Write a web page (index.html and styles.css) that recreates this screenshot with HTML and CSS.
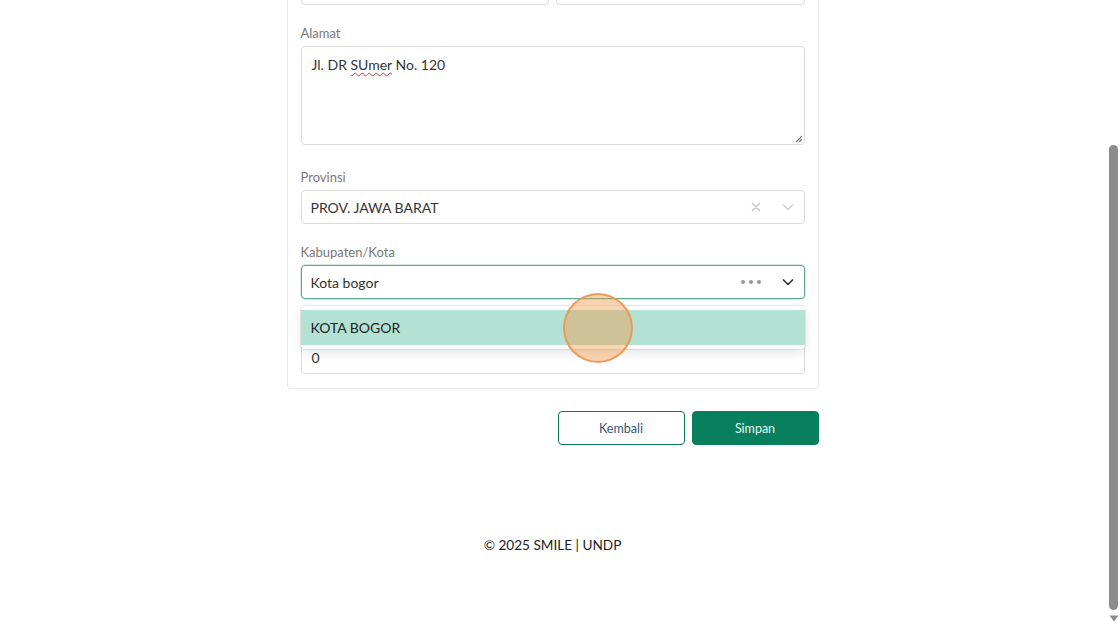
FILE: index.html
```html
<!DOCTYPE html>
<html lang="id">
<head>
<meta charset="utf-8">
<title>SMILE</title>
<link rel="stylesheet" href="styles.css">
</head>
<body>
<div class="viewport">
  <main class="page">
    <section class="card">
      <div class="field">
        <div class="row2">
          <div>
            <label class="label">Kecamatan</label>
            <div class="input"></div>
          </div>
          <div>
            <label class="label">Kelurahan</label>
            <div class="input"></div>
          </div>
        </div>
      </div>

      <div class="field field-area">
        <label class="label">Alamat</label>
        <div class="textarea">Jl. DR <span class="misspelled">SUmer</span> No. 120
          <svg class="grip" width="9" height="9" viewBox="0 0 9 9"><path d="M8 2 L2 8 M8 5 L5 8" stroke="#777" stroke-width="1.2"/></svg>
        </div>
      </div>

      <div class="field">
        <label class="label">Provinsi</label>
        <div class="select">
          <span class="value">PROV. JAWA BARAT</span>
          <span class="indicators">
            <svg class="ico" width="14" height="14" viewBox="0 0 14 14"><path d="M3.5 3.5 L10.5 10.5 M10.5 3.5 L3.5 10.5" stroke="#c8c8c8" stroke-width="1.6" stroke-linecap="round"/></svg>
            <svg class="ico chev" width="14" height="14" viewBox="0 0 14 14"><path d="M2.5 5 L7 9.5 L11.5 5" fill="none" stroke="#cccccc" stroke-width="1.4" stroke-linecap="round" stroke-linejoin="round"/></svg>
          </span>
        </div>
      </div>

      <div class="field">
        <label class="label">Kabupaten/Kota</label>
        <div class="select-wrap">
          <div class="select focused">
            <span class="value">Kota bogor</span>
            <span class="indicators">
              <span class="dots"><i></i><i></i><i></i></span>
              <svg class="ico chev" width="14" height="14" viewBox="0 0 14 14"><path d="M2.5 5 L7 9.5 L11.5 5" fill="none" stroke="#333" stroke-width="1.7" stroke-linecap="round" stroke-linejoin="round"/></svg>
            </span>
          </div>
          <div class="menu">
            <div class="option">KOTA BOGOR</div>
          </div>
          <div class="cursor"></div>
        </div>
      </div>

      <div class="field last">
        <label class="label">Kode Pos</label>
        <div class="input text">0</div>
      </div>
    </section>

    <div class="actions">
      <button class="btn btn-outline">Kembali</button>
      <button class="btn btn-primary">Simpan</button>
    </div>

    <footer class="footer">© 2025 SMILE | UNDP</footer>
  </main>
  <aside class="scrollbar">
    <div class="thumb"></div>
    <svg class="arrow" width="10" height="7" viewBox="0 0 10 7"><path d="M0.5 0.5 H9.5 L5 6.5 Z" fill="#8a8a8a"/></svg>
  </aside>
</div>
</body>
</html>
```

FILE: styles.css
```css
* { box-sizing: border-box; }
html, body {
  margin: 0;
  height: 626px;
  overflow: hidden;
  background: #fff;
}
body {
  font-family: Lato, "Noto Sans", "Liberation Sans", sans-serif;
  color: #333;
}
.viewport {
  display: flex;
  height: 626px;
}
.page {
  flex: 1;
  min-width: 0;
  display: flex;
  flex-direction: column;
  align-items: center;
}
.card {
  width: 532px;
  margin-top: -65px;
  border: 1px solid #e8e8e8;
  border-radius: 4px;
  padding: 13px 13px 14px;
  background: #fff;
}
.field { margin-bottom: 19px; }
.field.last { margin-bottom: 0; }
.field-area { margin-bottom: 23px; }
.label {
  display: block;
  font-size: 13px;
  line-height: 18px;
  margin-bottom: 4px;
  color: #777;
}
.row2 {
  display: grid;
  grid-template-columns: 1fr 1fr;
  gap: 7px;
}
.input {
  height: 34px;
  border: 1px solid #dcdcdc;
  border-radius: 4px;
  background: #fff;
}
.input.text {
  display: flex;
  align-items: center;
  padding: 0 10px;
  font-size: 14px;
  color: #333;
}
.textarea {
  position: relative;
  height: 99px;
  border: 1px solid #dcdcdc;
  border-radius: 4px;
  padding: 8px 10px;
  font-size: 14px;
  line-height: 20px;
  color: #333;
}
.misspelled {
  text-decoration: underline wavy #d33;
  text-decoration-thickness: 1px;
  text-underline-offset: 2px;
}
.grip {
  position: absolute;
  right: 1px;
  bottom: 1px;
}
.select-wrap { position: relative; }
.select {
  height: 34px;
  display: flex;
  align-items: center;
  justify-content: space-between;
  border: 1px solid #dcdcdc;
  border-radius: 4px;
  padding: 0 0 0 9px;
  font-size: 14px;
  color: #333;
  background: #fff;
}
.select.focused {
  border-color: #5aa88f;
  box-shadow: 0 0 0 1px rgba(90,168,143,0.25);
}
.indicators {
  display: flex;
  align-items: center;
  gap: 18px;
  padding-right: 9px;
}
.ico { display: block; }
.dots {
  display: flex;
  gap: 4px;
  margin-right: 2px;
}
.dots i {
  width: 4px;
  height: 4px;
  border-radius: 50%;
  background: #999;
}
.menu {
  position: absolute;
  left: 0;
  right: 0;
  top: calc(100% + 7px);
  padding: 4px 0;
  background: #fff;
  border-radius: 4px;
  box-shadow: 0 0 0 1px rgba(0,0,0,0.08), 0 4px 11px rgba(0,0,0,0.1);
  z-index: 2;
}
.option {
  height: 35px;
  display: flex;
  align-items: center;
  padding: 0 10px;
  background: #b3e2d4;
  font-size: 14px;
  color: #222;
}
.cursor {
  position: absolute;
  left: 262px;
  top: 28px;
  width: 70px;
  height: 70px;
  border-radius: 50%;
  background: rgba(244, 150, 70, 0.42);
  border: 2px solid rgba(236, 150, 80, 0.9);
  z-index: 3;
}
.actions {
  width: 532px;
  display: flex;
  justify-content: flex-end;
  gap: 7px;
  margin-top: 22px;
}
.btn {
  width: 127px;
  height: 34px;
  border-radius: 4px;
  font-family: inherit;
  font-size: 12.5px;
  cursor: pointer;
}
.btn-outline {
  background: #fff;
  border: 1px solid #0d7a5a;
  color: #34557c;
}
.btn-primary {
  background: #087f5d;
  border: 1px solid #087f5d;
  color: #e9f6f0;
}
.footer {
  margin-top: 90px;
  font-size: 13.6px;
  line-height: 20px;
  color: #222;
}
.scrollbar {
  width: 15px;
  flex: none;
  display: flex;
  flex-direction: column;
  align-items: center;
  padding-top: 145px;
}
.thumb {
  width: 9px;
  height: 465px;
  border-radius: 5px;
  background: #8c8c8c;
  margin-left: 2px;
}
.arrow {
  margin-top: 5px;
  margin-left: 2px;
}
```
